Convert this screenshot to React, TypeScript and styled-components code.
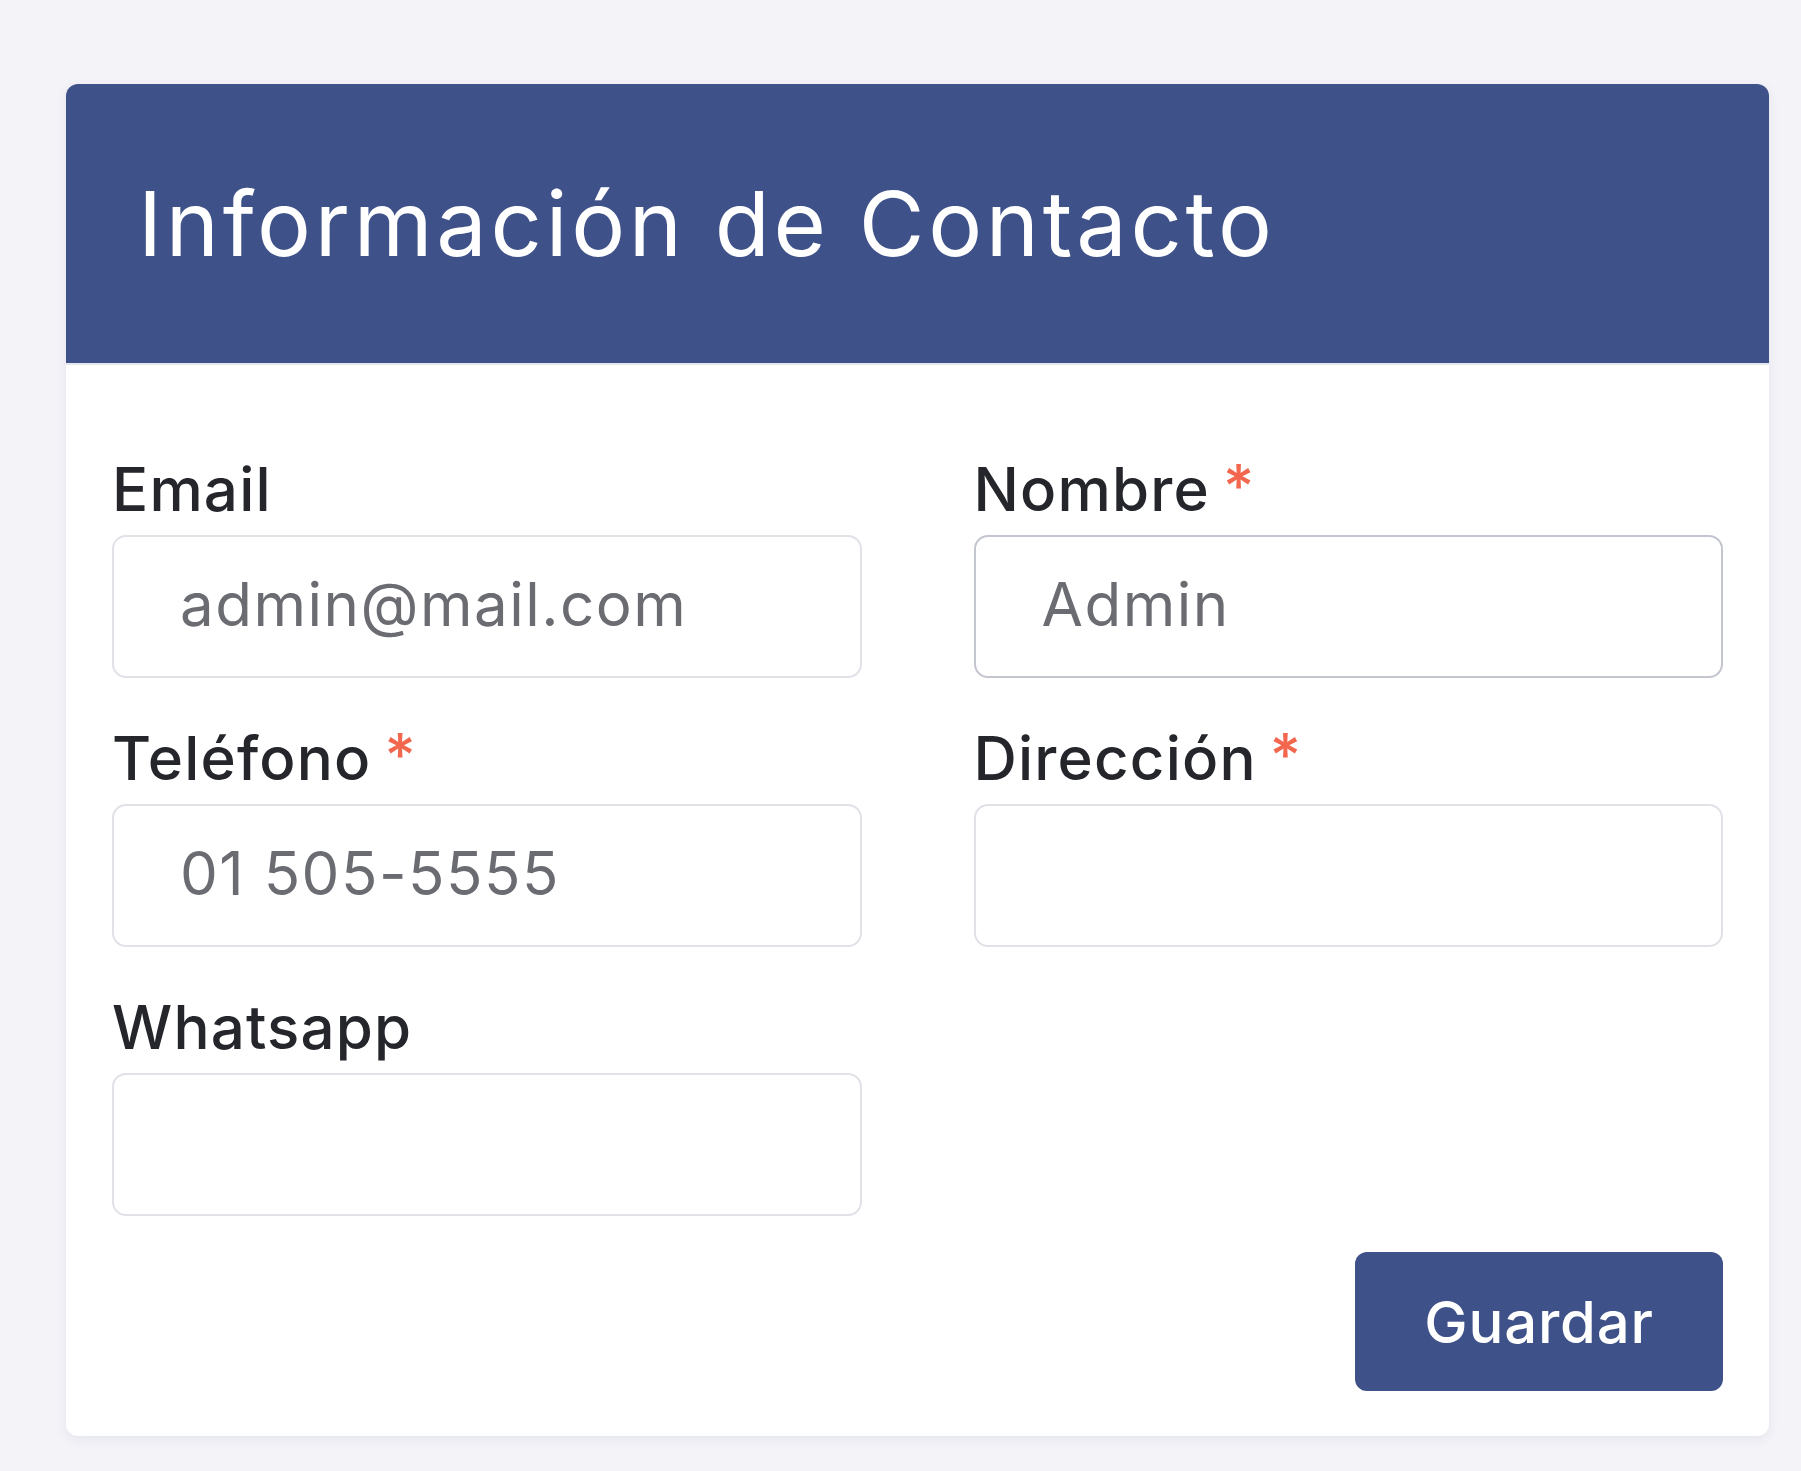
import React from "react";
import styled, { createGlobalStyle } from "styled-components";

const GlobalStyle = createGlobalStyle`
  html, body {
    margin: 0;
    padding: 0;
    background: #f3f3f8;
  }
  * {
    box-sizing: border-box;
  }
`;

const FONT = `Inter, "Noto Sans", "Liberation Sans", sans-serif`;

const Page = styled.div`
  padding: 84px 32px 35px 66px;
  font-family: ${FONT};
`;

const Card = styled.section`
  background: #ffffff;
  border-radius: 12px;
  box-shadow: 0 3px 12px rgba(60, 64, 110, 0.08);
  overflow: hidden;
`;

const CardHeader = styled.header`
  height: 281px;
  display: flex;
  align-items: center;
  padding: 0 72px;
  background: #3f5189;
  border-bottom: 2px solid #e5e7ee;
`;

const Title = styled.h2`
  margin: 0;
  font-size: 90px;
  font-weight: 400;
  letter-spacing: 3.7px;
  color: #ffffff;
`;

const CardBody = styled.form`
  padding: 88px 46px 45px;
`;

const FieldGrid = styled.div`
  display: grid;
  grid-template-columns: 1fr 1fr;
  column-gap: 112px;
  row-gap: 44px;
`;

const Field = styled.div`
  display: flex;
  flex-direction: column;
`;

const Label = styled.label`
  font-size: 60px;
  line-height: 72px;
  font-weight: 500;
  letter-spacing: 1.2px;
  color: #24262b;
  margin-bottom: 10px;
`;

const Required = styled.span`
  color: #f2674e;
  margin-left: 13px;
  vertical-align: 3px;
  line-height: 0;
`;

const Input = styled.input<{ $active?: boolean }>`
  height: 143px;
  width: 100%;
  padding: 0 0 6px 66px;
  border: 2px solid ${(p) => (p.$active ? "#c4c6cf" : "#e0e2e8")};
  border-radius: 14px;
  font-family: ${FONT};
  font-size: 60px;
  letter-spacing: 1.5px;
  color: #6b6c72;
  background: #ffffff;
  outline: none;
`;

const Actions = styled.div`
  display: flex;
  justify-content: flex-end;
  margin-top: 36px;
`;

const SaveButton = styled.button`
  width: 368px;
  height: 139px;
  border: none;
  border-radius: 12px;
  background: #3f5189;
  color: #ffffff;
  font-family: ${FONT};
  font-size: 58px;
  font-weight: 500;
  letter-spacing: 0.8px;
  cursor: pointer;
`;

type FieldDef = {
  id: string;
  label: string;
  value: string;
  required?: boolean;
  active?: boolean;
};

const fields: FieldDef[] = [
  { id: "email", label: "Email", value: "admin@mail.com" },
  { id: "nombre", label: "Nombre", value: "Admin", required: true, active: true },
  { id: "telefono", label: "Teléfono", value: "01 505-5555", required: true },
  { id: "direccion", label: "Dirección", value: "", required: true },
  { id: "whatsapp", label: "Whatsapp", value: "" },
];

export default function App() {
  return (
    <Page>
      <GlobalStyle />
      <Card>
        <CardHeader>
          <Title>Información de Contacto</Title>
        </CardHeader>
        <CardBody onSubmit={(e) => e.preventDefault()}>
          <FieldGrid>
            {fields.map((f) => (
              <Field key={f.id}>
                <Label htmlFor={f.id}>
                  {f.label}
                  {f.required && <Required>*</Required>}
                </Label>
                <Input id={f.id} defaultValue={f.value} $active={f.active} />
              </Field>
            ))}
          </FieldGrid>
          <Actions>
            <SaveButton type="submit">Guardar</SaveButton>
          </Actions>
        </CardBody>
      </Card>
    </Page>
  );
}
